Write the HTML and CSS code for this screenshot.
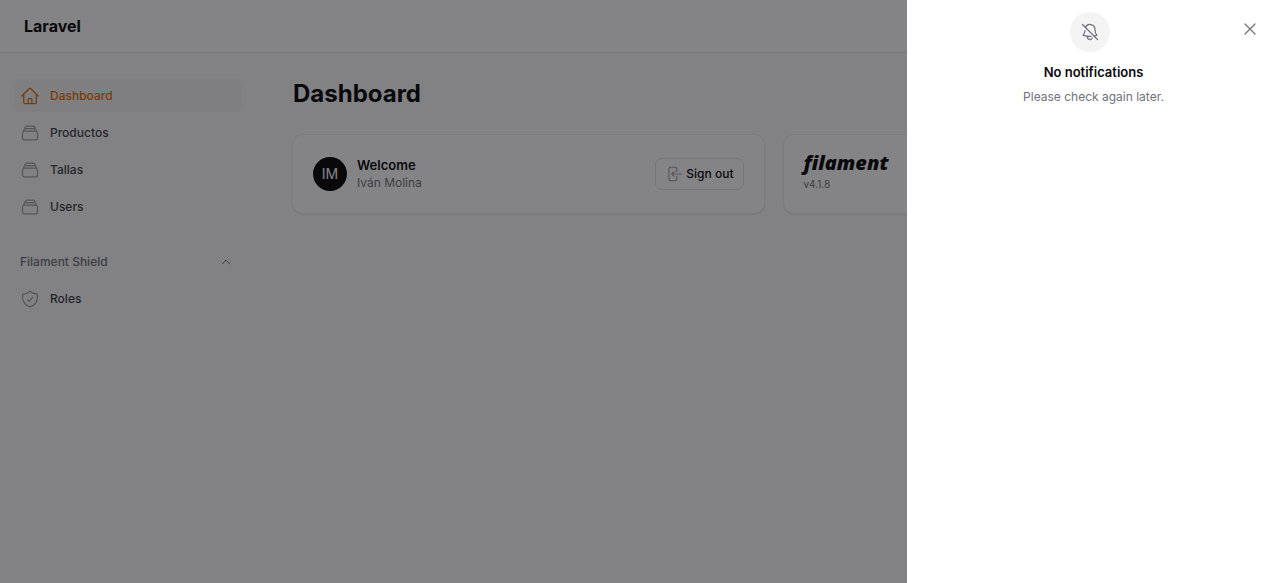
FILE: index.html
```html
<!DOCTYPE html>
<html lang="en">
<head>
<meta charset="utf-8">
<meta name="viewport" content="width=device-width, initial-scale=1">
<title>Dashboard - Laravel</title>
<link rel="stylesheet" href="styles.css">
</head>
<body>
<svg class="sprite" aria-hidden="true">
  <symbol id="stack" viewBox="0 0 24 24"><path d="M6 6.878V6a2.25 2.25 0 0 1 2.25-2.25h7.5A2.25 2.25 0 0 1 18 6v.878m-12 0c.235-.083.487-.128.75-.128h10.5c.263 0 .515.045.75.128m-12 0A2.25 2.25 0 0 0 4.5 9v.878m13.5-3A2.25 2.25 0 0 1 19.5 9v.878m0 0a2.246 2.246 0 0 0-.75-.128H5.25c-.263 0-.515.045-.75.128m15 0A2.25 2.25 0 0 1 21 12v6a2.25 2.25 0 0 1-2.25 2.25H5.25A2.25 2.25 0 0 1 3 18v-6c0-.98.626-1.813 1.5-2.122"/></symbol>
</svg>
<div class="page">
  <header class="topbar"><a class="brand" href="#">Laravel</a></header>
  <div class="layout">
    <nav class="sidebar" aria-label="Main">
      <div class="nav-list">
        <a class="nav-item active" href="#" aria-current="page">
          <svg class="icon" viewBox="0 0 24 24"><path d="m2.25 12 8.954-8.955c.44-.439 1.152-.439 1.591 0L21.75 12M4.5 9.75v10.125c0 .621.504 1.125 1.125 1.125H9.75v-4.875c0-.621.504-1.125 1.125-1.125h2.25c.621 0 1.125.504 1.125 1.125V21h4.125c.621 0 1.125-.504 1.125-1.125V9.75M8.25 21h8.25"/></svg>
          <span>Dashboard</span></a>
        <a class="nav-item" href="#"><svg class="icon"><use href="#stack"/></svg><span>Productos</span></a>
        <a class="nav-item" href="#"><svg class="icon"><use href="#stack"/></svg><span>Tallas</span></a>
        <a class="nav-item" href="#"><svg class="icon"><use href="#stack"/></svg><span>Users</span></a>
      </div>
      <div class="nav-list">
        <button class="nav-group" type="button" aria-expanded="true"><span>Filament Shield</span>
          <svg class="chevron" viewBox="0 0 24 24"><path d="m4.5 15.75 7.5-7.5 7.5 7.5"/></svg></button>
        <a class="nav-item" href="#">
          <svg class="icon" viewBox="0 0 24 24"><path d="M9 12.75 11.25 15 15 9.75m-3-7.036A11.959 11.959 0 0 1 3.598 6 11.99 11.99 0 0 0 3 9.749c0 5.592 3.824 10.29 9 11.623 5.176-1.332 9-6.03 9-11.622 0-1.31-.21-2.571-.598-3.751h-.152c-3.196 0-6.1-1.248-8.25-3.285Z"/></svg>
          <span>Roles</span></a>
      </div>
    </nav>
    <main class="main">
      <h1 class="title">Dashboard</h1>
      <div class="widgets">
        <section class="card">
          <span class="avatar" aria-hidden="true">IM</span>
          <div class="account">
            <h2 class="welcome">Welcome</h2>
            <p class="user">Iván Molina</p>
          </div>
          <button class="signout" type="button">
            <svg class="icon small" viewBox="0 0 24 24"><path d="M15.75 9V5.25A2.25 2.25 0 0 0 13.5 3h-6a2.25 2.25 0 0 0-2.25 2.25v13.5A2.25 2.25 0 0 0 7.5 21h6a2.25 2.25 0 0 0 2.25-2.25V15M12 9l-3 3m0 0 3 3m-3-3h12.75"/></svg>
            <span>Sign out</span></button>
        </section>
        <section class="card">
          <div class="product">
            <a class="filament" href="#">filament</a>
            <p class="version">v4.1.8</p>
          </div>
        </section>
      </div>
    </main>
  </div>
</div>
<div class="overlay"></div>
<aside class="drawer" role="dialog" aria-labelledby="empty-title">
  <button class="close" type="button" aria-label="Close"><svg class="icon" viewBox="0 0 24 24"><path d="M6 18 18 6M6 6l12 12"/></svg></button>
  <div class="badge"><svg class="icon" viewBox="0 0 24 24"><path d="M9.143 17.082a24.248 24.248 0 0 0 3.844.148m-3.844-.148a23.856 23.856 0 0 1-5.455-1.31 8.964 8.964 0 0 0 2.3-5.542m3.155 6.852a3 3 0 0 0 5.667 1.97m1.965-2.277L21 21m-4.225-4.225a23.81 23.81 0 0 0 3.536-1.003A8.967 8.967 0 0 1 18 9.75V9A6 6 0 0 0 6.53 6.53m10.245 10.245L6.53 6.53M3 3l3.53 3.53"/></svg></div>
  <h2 class="empty-title" id="empty-title">No notifications</h2>
  <p class="empty-text">Please check again later.</p>
</aside>
</body>
</html>
```
FILE: styles.css
```css
* { box-sizing: border-box; }
body {
  margin: 0;
  font-family: Inter, "Liberation Sans", sans-serif;
  font-size: 12px;
  line-height: 16px;
  color: #09090b;
  background: #fafafc;
}
h1, h2, p { margin: 0; }
a { color: inherit; text-decoration: none; }
button { font: inherit; color: inherit; border: 0; background: none; padding: 0; }
svg { fill: none; stroke: currentColor; stroke-width: 1.5; stroke-linecap: round; stroke-linejoin: round; }
.sprite { position: absolute; width: 0; height: 0; }
.icon { width: 20px; height: 20px; flex: none; color: #9f9fa9; }
.page { min-height: 100vh; }
.topbar {
  display: flex;
  align-items: center;
  height: 53px;
  padding: 0 24px;
  background: #fff;
  border-bottom: 1px solid #e4e4e7;
}
.brand { font-size: 16px; line-height: 24px; font-weight: 700; }
.layout { display: flex; }
.sidebar {
  flex: none;
  display: flex;
  flex-direction: column;
  gap: 22px;
  width: 266px;
  padding: 26px 24px 26px 14px;
}
.nav-list { display: flex; flex-direction: column; gap: 4px; }
.nav-item {
  display: flex;
  align-items: center;
  gap: 10px;
  height: 33px;
  padding: 0 6px;
  border-radius: 6px;
  font-weight: 500;
  color: #3f3f46;
}
.nav-item.active { color: #e17100; background: #f5f5f7; }
.nav-item.active .icon { color: #e17100; }
.nav-group {
  display: flex;
  align-items: center;
  justify-content: space-between;
  height: 33px;
  padding: 0 10px 0 6px;
  font-weight: 500;
  color: #71717b;
}
.chevron { width: 12px; height: 12px; stroke-width: 2; }
.main { flex: 1; min-width: 0; padding: 26px 26px 26px 27px; }
.title { font-size: 24px; line-height: 30px; font-weight: 700; }
.widgets { display: grid; grid-template-columns: 1fr 1fr; gap: 20px; margin-top: 26px; }
.card {
  display: flex;
  align-items: center;
  gap: 10px;
  min-height: 77px;
  padding: 16px 20px;
  border-radius: 10px;
  background: #fff;
  box-shadow: 0 0 0 1px #f0f0f2, 0 1px 2px rgba(0, 0, 0, .3);
}
.avatar {
  display: grid;
  place-items: center;
  flex: none;
  width: 34px;
  height: 34px;
  border-radius: 50%;
  background: #09090b;
  color: #fff;
  font-size: 14px;
}
.account { flex: 1; }
.welcome { font-size: 13px; line-height: 18px; font-weight: 600; }
.user { line-height: 18px; color: #71717b; }
.signout {
  display: flex;
  align-items: center;
  gap: 3px;
  height: 32px;
  padding: 0 9px;
  border: 1px solid #e4e4e7;
  border-radius: 7px;
  font-weight: 500;
}
.small { width: 18px; height: 18px; }
.product { display: flex; flex-direction: column; padding-bottom: 4px; }
.filament { font: italic 800 20px/24px "Open Sans", "Noto Sans", sans-serif; }
.version { font-size: 10px; line-height: 18px; color: #71717b; }
.overlay { position: fixed; inset: 0; background: rgba(9, 9, 13, .5); }
.drawer {
  position: fixed;
  inset: 0 0 0 auto;
  display: flex;
  flex-direction: column;
  align-items: center;
  width: 373px;
  max-width: 100%;
  padding-top: 12px;
  background: #fff;
}
.badge {
  display: grid;
  place-items: center;
  width: 40px;
  height: 40px;
  margin-right: 7px;
  border-radius: 50%;
  background: #f4f4f5;
}
.badge .icon, .close .icon { color: #71717b; }
.empty-title { margin-top: 10px; font-size: 13px; line-height: 20px; font-weight: 600; }
.empty-text { margin-top: 7px; line-height: 16px; color: #71717b; }
.close { position: absolute; top: 19px; right: 20px; width: 20px; height: 20px; }
```
